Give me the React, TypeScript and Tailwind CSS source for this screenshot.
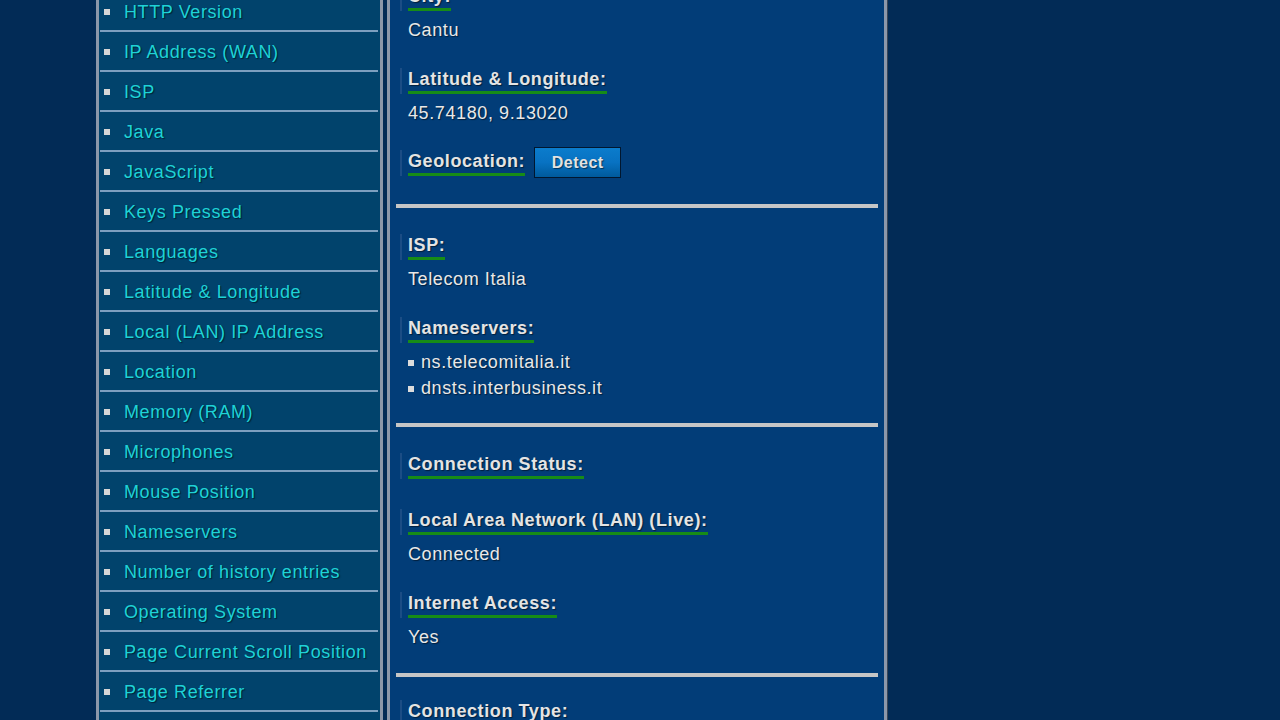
const sideItems = [
  "HTTP Version",
  "IP Address (WAN)",
  "ISP",
  "Java",
  "JavaScript",
  "Keys Pressed",
  "Languages",
  "Latitude & Longitude",
  "Local (LAN) IP Address",
  "Location",
  "Memory (RAM)",
  "Microphones",
  "Mouse Position",
  "Nameservers",
  "Number of history entries",
  "Operating System",
  "Page Current Scroll Position",
  "Page Referrer",
];

const shadow = "[text-shadow:1px_1px_1px_rgba(0,0,0,0.5)]";

const Label = ({ text }: { text: string }) => {
  return (
    <div className="flex pl-[10px]">
      <div className="border-l-2 border-[#1b4d85] pl-[6px]">
        <span
          className={`inline-block border-b-[3px] border-[#178c17] leading-[23px] font-bold text-[18px] tracking-[0.6px] text-[#e4e4e4] ${shadow}`}
        >
          {text}
        </span>
      </div>
    </div>
  );
};

const Value = ({ text }: { text: string }) => {
  return (
    <p
      className={`mt-[8px] pl-[18px] leading-[23px] text-[18px] tracking-[0.6px] text-[#e8e8e8] ${shadow}`}
    >
      {text}
    </p>
  );
};

const Rule = ({ mt }: { mt: string }) => {
  return <div className={`${mt} mx-[6px] h-[4px] bg-[#c6c6c6]`} />;
};

const Sidebar = () => {
  return (
    <aside className="w-[287px] shrink-0 border-x-[3px] border-[#8b97aa] bg-[#01436c]">
      <ul className="-mt-[8px] pl-[1px] pr-[2px]">
        {sideItems.map((item) => (
          <li
            key={item}
            className="flex items-center h-[40px] border-b-2 border-[#7d9fbf] pl-[4px]"
          >
            <span className="w-[6px] h-[6px] bg-[#d6d6d6] mt-[2px] shrink-0" />
            <span
              className={`ml-[14px] pt-[2px] text-[18px] tracking-[0.6px] text-[#1fd2d6] ${shadow}`}
            >
              {item}
            </span>
          </li>
        ))}
      </ul>
    </aside>
  );
};

const Main = () => {
  return (
    <main className="w-[500px] shrink-0 border-x-[3px] border-[#8b97aa] bg-[#023d78] shadow-[1px_0_0_#3a4656]">
      <div className="-mt-[15px] flex flex-col">
        <Label text="City:" />
        <Value text="Cantu" />

        <div className="mt-[26px]">
          <Label text="Latitude & Longitude:" />
          <Value text="45.74180, 9.13020" />
        </div>

        <div className="mt-[22px] flex items-center gap-[9px]">
          <Label text="Geolocation:" />
          <button
            className={`w-[87px] h-[31px] border border-[#01172f] bg-gradient-to-b from-[#0b7ccc] via-[#0872c2] to-[#005a9c] text-[16px] font-bold tracking-[0.5px] text-[#e2e2e2] ${shadow}`}
          >
            Detect
          </button>
        </div>

        <Rule mt="mt-[26px]" />

        <div className="mt-[26px]">
          <Label text="ISP:" />
          <Value text="Telecom Italia" />
        </div>

        <div className="mt-[26px]">
          <Label text="Nameservers:" />
          <ul className="mt-[6px] pl-[18px]">
            {["ns.telecomitalia.it", "dnsts.interbusiness.it"].map((ns) => (
              <li
                key={ns}
                className={`flex items-center leading-[26px] text-[18px] tracking-[0.6px] text-[#e8e8e8] ${shadow}`}
              >
                <span className="w-[6px] h-[6px] bg-[#dcdcdc] mr-[7px] mt-[1px]" />
                {ns}
              </li>
            ))}
          </ul>
        </div>

        <Rule mt="mt-[22px]" />

        <div className="mt-[26px]">
          <Label text="Connection Status:" />
        </div>

        <div className="mt-[30px]">
          <Label text="Local Area Network (LAN) (Live):" />
          <Value text="Connected" />
        </div>

        <div className="mt-[26px]">
          <Label text="Internet Access:" />
          <Value text="Yes" />
        </div>

        <Rule mt="mt-[24px]" />

        <div className="mt-[23px]">
          <Label text="Connection Type:" />
        </div>
      </div>
    </main>
  );
};

export default function App() {
  return (
    <div className="h-[720px] w-full overflow-hidden bg-[#022b56] font-['Liberation_Sans',Arial,sans-serif]">
      <div className="flex gap-[4px] pl-[96px] h-full">
        <Sidebar />
        <Main />
      </div>
    </div>
  );
}
